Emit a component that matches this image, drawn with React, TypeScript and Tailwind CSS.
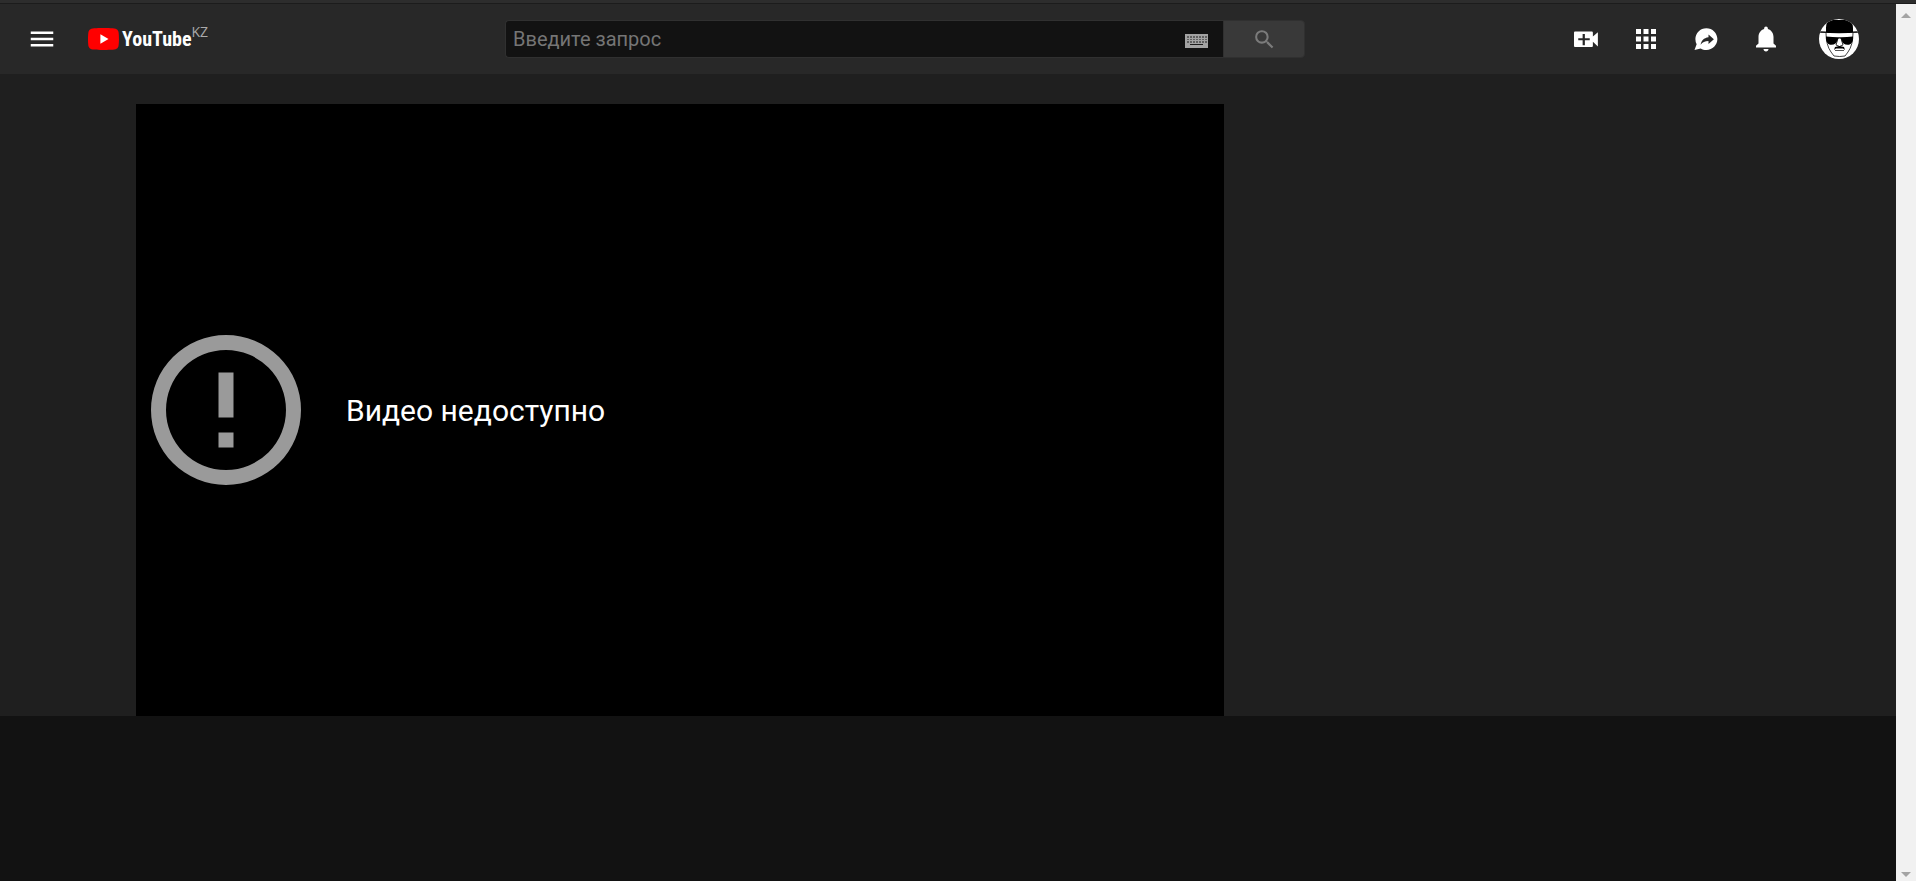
import type { ReactNode } from "react";

interface IconButtonProps {
  label: string;
  children: ReactNode;
}

function IconButton({ label, children }: IconButtonProps) {
  return (
    <button type="button" aria-label={label} className="flex size-[50px] items-center justify-center text-white">
      <svg viewBox="0 0 24 24" className="size-[30px] fill-current">
        {children}
      </svg>
    </button>
  );
}

function Logo() {
  return (
    <a href="/" aria-label="YouTube" className="ml-[21px] flex items-center">
      <svg viewBox="0 0 31 22" className="mr-[3px] h-[22px] w-[31px]">
        <path
          fill="#ff0000"
          d="M30.4 3.4A3.9 3.9 0 0 0 27.6.7C25.2 0 15.5 0 15.5 0S5.8 0 3.4.7A3.9 3.9 0 0 0 .6 3.4C0 5.9 0 11 0 11s0 5.1.6 7.6a3.9 3.9 0 0 0 2.8 2.7c2.4.7 12.1.7 12.1.7s9.7 0 12.1-.7a3.9 3.9 0 0 0 2.8-2.7C31 16.1 31 11 31 11s0-5.1-.6-7.6z"
        />
        <path fill="#fff" d="M12.4 15.7 20.5 11l-8.1-4.7z" />
      </svg>
      <span className="font-['Roboto_Condensed',Roboto,sans-serif] text-xl leading-7 font-bold text-white">
        YouTube
      </span>
      <span className="self-start font-['Open_Sans',sans-serif] text-sm leading-[14px] text-[#aaaaaa]">KZ</span>
    </a>
  );
}

function KeyboardIcon() {
  const columns = [2, 5, 8, 11, 14, 17, 20];

  return (
    <svg viewBox="0 0 23 14" className="h-3.5 w-[23px]">
      <path fill="#a3a3a3" d="M0 0h23v14H0z" />
      {[2, 5, 7].map((y) =>
        columns.map((x) => <path key={`${x}-${y}`} fill="#606060" d={`M${x} ${y}h2v${y === 5 ? 1 : 2}h-2z`} />),
      )}
      <path fill="#1c1c1c" d="M5 10h13v1H5z" />
    </svg>
  );
}

function SearchForm() {
  return (
    <form className="flex h-[38px] w-[800px] shrink" onSubmit={(e) => e.preventDefault()}>
      <div className="flex flex-1 items-center rounded-l-sm border border-r-0 border-[#303030] bg-[#121212] pr-[15px] pl-[7px]">
        <input
          type="text"
          aria-label="Введите запрос"
          placeholder="Введите запрос"
          className="min-w-0 flex-1 bg-transparent text-xl leading-6 text-white outline-none placeholder:text-[#757575]"
        />
        <button type="button" aria-label="Экранная клавиатура" className="mt-1">
          <KeyboardIcon />
        </button>
      </div>
      <button
        type="submit"
        aria-label="Поиск"
        className="flex w-[82px] items-center justify-center rounded-r-sm border border-[#303030] bg-[#393939]"
      >
        <svg viewBox="0 0 24 24" className="size-[25px] fill-[#7b7b7b]">
          <path d="M15.5 14h-.79l-.28-.27A6.47 6.47 0 0 0 16 9.5 6.5 6.5 0 1 0 9.5 16c1.61 0 3.09-.59 4.23-1.57l.27.28v.79l5 4.99L20.49 19l-4.99-5zm-6 0C7.01 14 5 11.99 5 9.5S7.01 5 9.5 5 14 7.01 14 9.5 11.99 14 9.5 14z" />
        </svg>
      </button>
    </form>
  );
}

function Avatar() {
  return (
    <svg viewBox="0 0 40 40" className="size-10 rounded-full">
      <path fill="#fff" d="M0 0h40v40H0z" />
      {/* face */}
      <path fill="none" stroke="#444" d="M7 14q0 12 5 19l3 4q6 1 11 0l3-4q5-7 5-19" />
      {/* hat */}
      <path d="M7 13V9q0-6 3-7 5-2 10-1 6-1 11 1 3 2 3 7v4z" />
      <path d="M1 12.200q19 1 38 0v1.600q-19 .8-38 0z" />
      {/* glasses */}
      <path d="M7 17.500q7 .7 12 .7h3q6 0 12-.7.500 7-4 8.200-6 .8-8-5.200l-.7-1h-1.600l-.7 1q-2 6-8 5.200-4.500-1.200-4-8.200z" />
      <path fill="none" stroke="#333" d="m18.500 21-1.500 5 3.500 1.500L24 26l-1.500-5" />
      {/* moustache */}
      <path d="m15 31 1-3 4.500-1 4.500 1 1 3-2-1.500h-7z" />
      <path fill="none" stroke="#555" d="M16 31.500h9" />
    </svg>
  );
}

function Masthead() {
  return (
    <header className="flex h-[70px] items-center justify-between bg-[#282828] pr-[37px] pl-[17px]">
      <div className="flex w-[232px] items-center">
        <IconButton label="Меню">
          <path d="M3 18h18v-2H3v2zm0-5h18v-2H3v2zm0-7v2h18V6H3z" />
        </IconButton>
        <Logo />
      </div>

      <SearchForm />

      <div className="flex items-center gap-2.5">
        <IconButton label="Создать видео">
          <path d="M17.5 10V7c0-.6-.4-1-1-1H3.400c-.6 0-1 .4-1 1v10.400c0 .6.400 1 1 1h13.100c.6 0 1-.4 1-1v-3.200l4 3.800V6.500l-4 3.500zM15 13h-3.900v4H9.300v-4H5.800v-1.700h3.500V8h1.800v3.300H15V13z" />
        </IconButton>
        <IconButton label="Приложения">
          <path d="M4 8h4V4H4v4zm6 12h4v-4h-4v4zm-6 0h4v-4H4v4zm0-6h4v-4H4v4zm6 0h4v-4h-4v4zm6-10v4h4V4h-4zm-6 4h4V4h-4v4zm6 6h4v-4h-4v4zm0 6h4v-4h-4v4z" />
        </IconButton>
        <IconButton label="Сообщения">
          <path d="M12.300 3.300c4.900 0 8.800 3.900 8.800 8.700s-3.900 8.700-8.800 8.700c-1.700 0-3.200-.4-4.500-1.200l-5 1.200 1.700-4.600a8.600 8.600 0 0 1-1-4.100c0-4.800 3.900-8.700 8.800-8.700zm1.700 5v2.300c-3.900.5-5.700 2.900-6.300 5.900 1.500-2 3.400-2.900 6.300-2.900v2.400l4.300-3.900-4.300-3.800z" />
        </IconButton>
        <IconButton label="Уведомления">
          <path d="M10 20h4c0 1.100-.9 2-2 2s-2-.9-2-2zm10-2.700v1.500H4v-1.500l2-1.700v-5.200c0-3.300 1.800-5.700 4.500-6.500V3.500C10.500 2.700 11.200 2 12 2s1.500.7 1.500 1.500v.4c2.700.8 4.500 3.200 4.500 6.500v5.200l2 1.700z" />
        </IconButton>
        <button type="button" aria-label="Аккаунт" className="ml-[18px]">
          <Avatar />
        </button>
      </div>
    </header>
  );
}

function Player() {
  return (
    <div className="flex aspect-video items-center bg-black">
      <svg viewBox="0 0 24 24" className="size-[180px] shrink-0 fill-[#9a9a9a]">
        <path d="M11 15h2v2h-2zm0-8h2v6h-2zm1-5a10 10 0 1 0 0 20 10 10 0 0 0 0-20zm0 18a8 8 0 1 1 0-16 8 8 0 0 1 0 16z" />
      </svg>
      <p className="ml-[30px] pt-0.5 text-3xl text-white">Видео недоступно</p>
    </div>
  );
}

function Scrollbar() {
  return (
    <div aria-hidden="true" className="flex w-5 flex-col items-center justify-between bg-[#f1f1f1] pt-[9px] pb-1">
      <svg viewBox="0 0 10 5" className="h-[5px] w-2.5 fill-[#a3a3a3]">
        <path d="M0 5h10L5 0z" />
      </svg>
      <svg viewBox="0 0 10 5" className="h-[5px] w-2.5 fill-[#a3a3a3]">
        <path d="M0 0h10L5 5z" />
      </svg>
    </div>
  );
}

export default function App() {
  return (
    <div className="flex min-h-screen flex-col bg-[#121212] font-[Roboto,sans-serif]">
      <div className="h-1 border-b border-[#1c1c1c] bg-[#2d2d2d]" />
      <div className="flex flex-1">
        <div className="min-w-0 flex-1">
          <Masthead />
          <main className="flex bg-[#1f1f1f] pt-[30px] pl-[136px]">
            <div className="min-w-0 flex-1">
              <Player />
            </div>
            <aside className="w-[672px] shrink-0" />
          </main>
        </div>
        <Scrollbar />
      </div>
    </div>
  );
}
